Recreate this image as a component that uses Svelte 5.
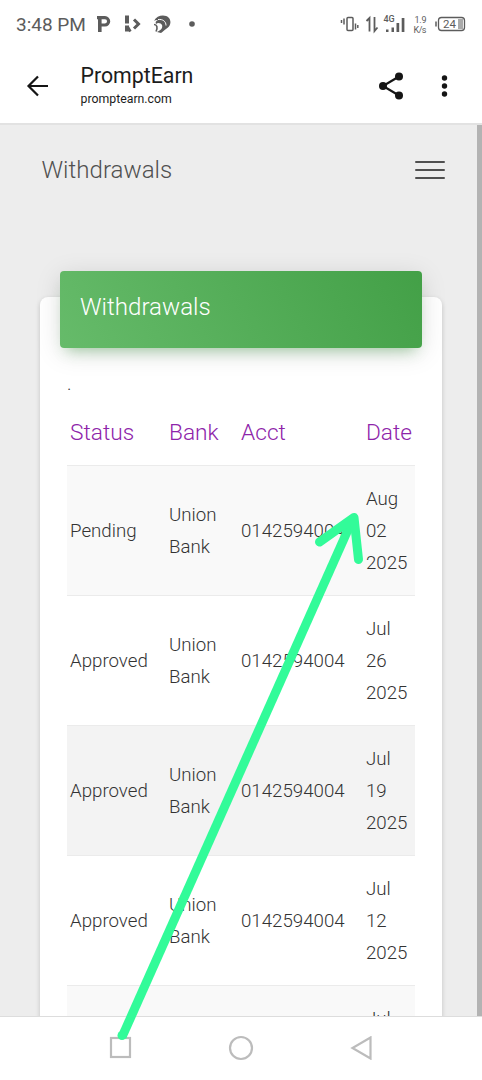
<script lang="ts">
  type Withdrawal = {
    status: string;
    bank: string;
    acct: string;
    date: string;
  };

  const columns = ['Status', 'Bank', 'Acct', 'Date'];

  const withdrawals: Withdrawal[] = [
    { status: 'Pending', bank: 'Union Bank', acct: '0142594004', date: 'Aug 02 2025' },
    { status: 'Approved', bank: 'Union Bank', acct: '0142594004', date: 'Jul 26 2025' },
    { status: 'Approved', bank: 'Union Bank', acct: '0142594004', date: 'Jul 19 2025' },
    { status: 'Approved', bank: 'Union Bank', acct: '0142594004', date: 'Jul 12 2025' },
    { status: 'Approved', bank: 'Union Bank', acct: '0142594004', date: 'Jul 05 2025' },
  ];

  let activeRow = 2;
</script>

<div class="phone">
  <header class="status-bar">
    <span class="clock">3:48 PM</span>
    <svg class="notifications" width="106" height="24" viewBox="0 0 106 24" aria-hidden="true">
      <g fill="none" stroke="#5c5c5c">
        <path d="M3.800 4v16" stroke-width="3.600" />
        <path d="M1 5.700h8a3 3 0 0 1 0 7.300H4" stroke-width="3.200" />
        <path d="M31 3.500v8M31 13.500v6" stroke-width="4" />
        <path d="M31.500 14.500l3 5" stroke-width="2.500" />
        <path d="M38 7.500l4.500 4.500l-4.500 4.500" stroke-width="3" />
      </g>
      <path
        d="M58 9C61 3 69 2 73 6c3 4 1 9-3 11-2 1-3 3-5 4l-4-1c4-2 6-4 5-7-1-2-4-3-6-1-1-2 0-3 2-4-2 0-3 0-4 1z"
        fill="#5c5c5c"
      />
      <path d="M62 7.500c5-.5 8 2 8 6M58 13.500c4-2 6 0 5 4" fill="none" stroke="#fff" stroke-width="1" />
      <path d="M58 12.500c3 0 4 3 2 7" fill="none" stroke="#5c5c5c" stroke-width="1.600" />
      <circle cx="96" cy="12" r="2.800" fill="#5c5c5c" />
    </svg>
    <svg class="system" width="128" height="24" viewBox="0 0 128 24" aria-hidden="true">
      <g fill="none" stroke="#5c5c5c" stroke-width="1.500">
        <rect x="8" y="5.500" width="6" height="13" rx="1" />
        <path d="M2.500 8v3M5 6.500v6M16.500 11.500v6M18.800 13v3" />
        <path d="M27.500 9l3-3v13.500M35.500 5v14l3-3.500" stroke-width="1.800" />
        <rect x="99.500" y="5.500" width="26" height="13" rx="3" stroke-width="1.300" />
        <path d="M97 9.500v5" />
      </g>
      <path d="M47 17.500h2.500v2.500h-2.500zM52.500 15.500h2.500v4.500h-2.500zM57.500 11h2.700v9h-2.700zM62.700 6h2.700v14h-2.700z" fill="#5c5c5c" />
      <path d="M119 7h5v10h-5z" fill="#aaa" />
      <g fill="#5c5c5c">
        <text x="44.500" y="9.500" font-size="9" font-weight="500">4G</text>
        <text x="75.500" y="10.500" font-size="9" font-weight="400" textLength="12">1.9</text>
        <text x="74.500" y="20.500" font-size="9" font-weight="400" textLength="13">K/s</text>
        <text x="104" y="16" font-size="11.500" font-weight="400">24</text>
      </g>
    </svg>
  </header>

  <div class="browser-bar">
    <svg class="back" width="24" height="24" viewBox="0 0 24 24" aria-label="Back">
      <path d="M22 12H3M12 2.500L2.500 12L12 21.500" fill="none" stroke="#151515" stroke-width="2.200" />
    </svg>
    <div class="site">
      <span class="site-title">PromptEarn</span>
      <span class="site-host">promptearn.com</span>
    </div>
    <svg width="28" height="30" viewBox="0 0 28 30" aria-label="Share">
      <path d="M21 5.500L5 15L21 24.500" fill="none" stroke="#151515" stroke-width="2.200" />
      <g fill="#151515">
        <circle cx="21" cy="5.500" r="4" />
        <circle cx="5" cy="15" r="4" />
        <circle cx="21" cy="24.500" r="4" />
      </g>
    </svg>
    <svg class="more" width="8" height="24" viewBox="0 0 8 24" aria-label="More">
      <g fill="#151515">
        <circle cx="3.500" cy="4" r="2.700" />
        <circle cx="3.500" cy="12" r="2.700" />
        <circle cx="3.500" cy="20" r="2.700" />
      </g>
    </svg>
  </div>

  <div class="viewport">
    <main class="page">
      <nav class="navbar">
        <span>Withdrawals</span>
        <button class="toggler" aria-label="Toggle navigation">
          <i></i>
          <i></i>
          <i></i>
        </button>
      </nav>

      <section class="card">
        <h4 class="card-header">Withdrawals</h4>
        <div class="card-body">
          <div class="note">.</div>
          <table>
            <thead>
              <tr>
                {#each columns as column}
                  <th>{column}</th>
                {/each}
              </tr>
            </thead>
            <tbody>
              {#each withdrawals as row, i}
                <tr class:active={i === activeRow}>
                  <td>{row.status}</td>
                  <td>{row.bank}</td>
                  <td>{row.acct}</td>
                  <td>{row.date}</td>
                </tr>
              {/each}
            </tbody>
          </table>
        </div>
      </section>
    </main>
    <div class="scrollbar"></div>
  </div>

  <footer class="system-nav">
    <svg width="24" height="24" viewBox="0 0 24 24" aria-label="Recents">
      <rect x="2" y="2" width="19" height="19" />
    </svg>
    <svg width="26" height="26" viewBox="0 0 26 26" aria-label="Home">
      <circle cx="13" cy="13" r="11" />
    </svg>
    <svg width="24" height="24" viewBox="0 0 24 24" aria-label="Back">
      <path d="M21.500 1.500v21L3.500 12z" />
    </svg>
  </footer>

  <!-- Marker pointing at the newest withdrawal -->
  <svg class="marker" width="482" height="1080" viewBox="0 0 482 1080" aria-hidden="true">
    <path d="M122 1037L351 523" stroke-linecap="butt" />
    <circle cx="122" cy="1035.500" r="4.500" />
    <path d="M319.500 542L354 517.500L358.500 559.500" />
  </svg>
</div>

<style>
  :global(body) {
    margin: 0;
    overflow: hidden;
  }

  .phone {
    position: relative;
    display: flex;
    flex-direction: column;
    width: 482px;
    height: 1080px;
    overflow: hidden;
    background: #fff;
    font-family: Roboto, 'Liberation Sans', sans-serif;
    font-weight: 300;
    color: #333;
  }

  .status-bar {
    display: flex;
    align-items: center;
    height: 48px;
    padding: 0 15px 0 16px;
    box-sizing: border-box;
  }

  .clock {
    width: 80px;
    font-size: 19px;
    font-weight: 400;
    white-space: nowrap;
    color: #5c5c5c;
  }

  .system {
    margin-left: auto;
  }

  .browser-bar {
    display: flex;
    align-items: center;
    height: 77px;
    padding: 0 33px 0 26px;
    box-sizing: border-box;
    border-bottom: 2px solid #e2e2e2;
  }

  .site {
    display: flex;
    flex: 1;
    flex-direction: column;
    margin-left: 30.5px;
    font-weight: 400;
    color: #1c1c1c;
  }

  .site-title {
    font-size: 21.3px;
    line-height: 28px;
  }

  .site-host {
    font-size: 12.3px;
    line-height: 19px;
  }

  .more {
    margin-left: 35px;
  }

  .viewport {
    display: flex;
    height: 891px;
    overflow: hidden;
    background: #ededed;
  }

  .page {
    flex: 1;
    padding: 0 35px 0 40px;
  }

  .scrollbar {
    width: 5px;
    height: 100%;
    background: #b3b3b3;
  }

  .navbar {
    display: flex;
    align-items: center;
    justify-content: space-between;
    height: 90px;
    margin-right: -3px;
    padding-left: 1.5px;
    font-size: 24.1px;
    color: #505050;
  }

  .toggler {
    display: flex;
    flex-direction: column;
    gap: 6px;
    width: 30px;
    padding: 0;
    border: 0;
    background: none;
  }

  .toggler i {
    height: 2px;
    border-radius: 1px;
    background: #505050;
  }

  .card {
    height: 900px;
    margin-top: 82px;
    border-radius: 8px;
    background: #fff;
    box-shadow: 0 2px 5px rgba(0, 0, 0, 0.18);
  }

  .card-header {
    position: relative;
    top: -26px;
    height: 77px;
    margin: 0 20px;
    padding: 20px;
    box-sizing: border-box;
    border-radius: 4px;
    background: linear-gradient(60deg, #66bb6a, #43a047);
    box-shadow:
      0 5px 26px rgba(0, 0, 0, 0.13),
      0 9px 13px -7px rgba(76, 175, 80, 0.45);
    font-size: 24.1px;
    font-weight: 300;
    line-height: 33px;
    color: #fff;
  }

  .card-body {
    padding: 0 27px;
  }

  .note {
    height: 33px;
    margin-top: -6px;
    font-size: 18.7px;
    line-height: 33px;
  }

  table {
    width: 348px;
    table-layout: fixed;
    border-collapse: collapse;
  }

  th {
    height: 64px;
    padding: 0 3px;
    box-sizing: border-box;
    border-bottom: 1px solid #ebebeb;
    font-size: 22.7px;
    font-weight: 300;
    text-align: left;
    color: #8e24aa;
  }

  th:nth-child(1) {
    width: 99px;
  }

  th:nth-child(2) {
    width: 72px;
  }

  th:nth-child(3) {
    width: 125px;
  }

  td {
    height: 130px;
    padding: 2px 3px 0;
    box-sizing: border-box;
    border-bottom: 1px solid #ebebeb;
    font-size: 18.7px;
    line-height: 32px;
  }

  tbody tr:nth-child(odd) {
    background: #f9f9f9;
  }

  tbody tr.active {
    background: #f3f3f3;
  }

  .system-nav {
    display: flex;
    align-items: center;
    justify-content: space-between;
    height: 64px;
    padding: 0 109px 2px;
    box-sizing: border-box;
    border-top: 1px solid #ddd;
    background: #fff;
  }

  .system-nav svg {
    fill: none;
    stroke: #bcbcbc;
    stroke-width: 2.2;
  }

  .marker {
    position: absolute;
    inset: 0;
    pointer-events: none;
    fill: none;
    stroke: #32fb99;
    stroke-width: 9;
    stroke-linecap: round;
    stroke-linejoin: round;
  }

  .marker circle {
    fill: #32fb99;
    stroke: none;
  }
</style>
